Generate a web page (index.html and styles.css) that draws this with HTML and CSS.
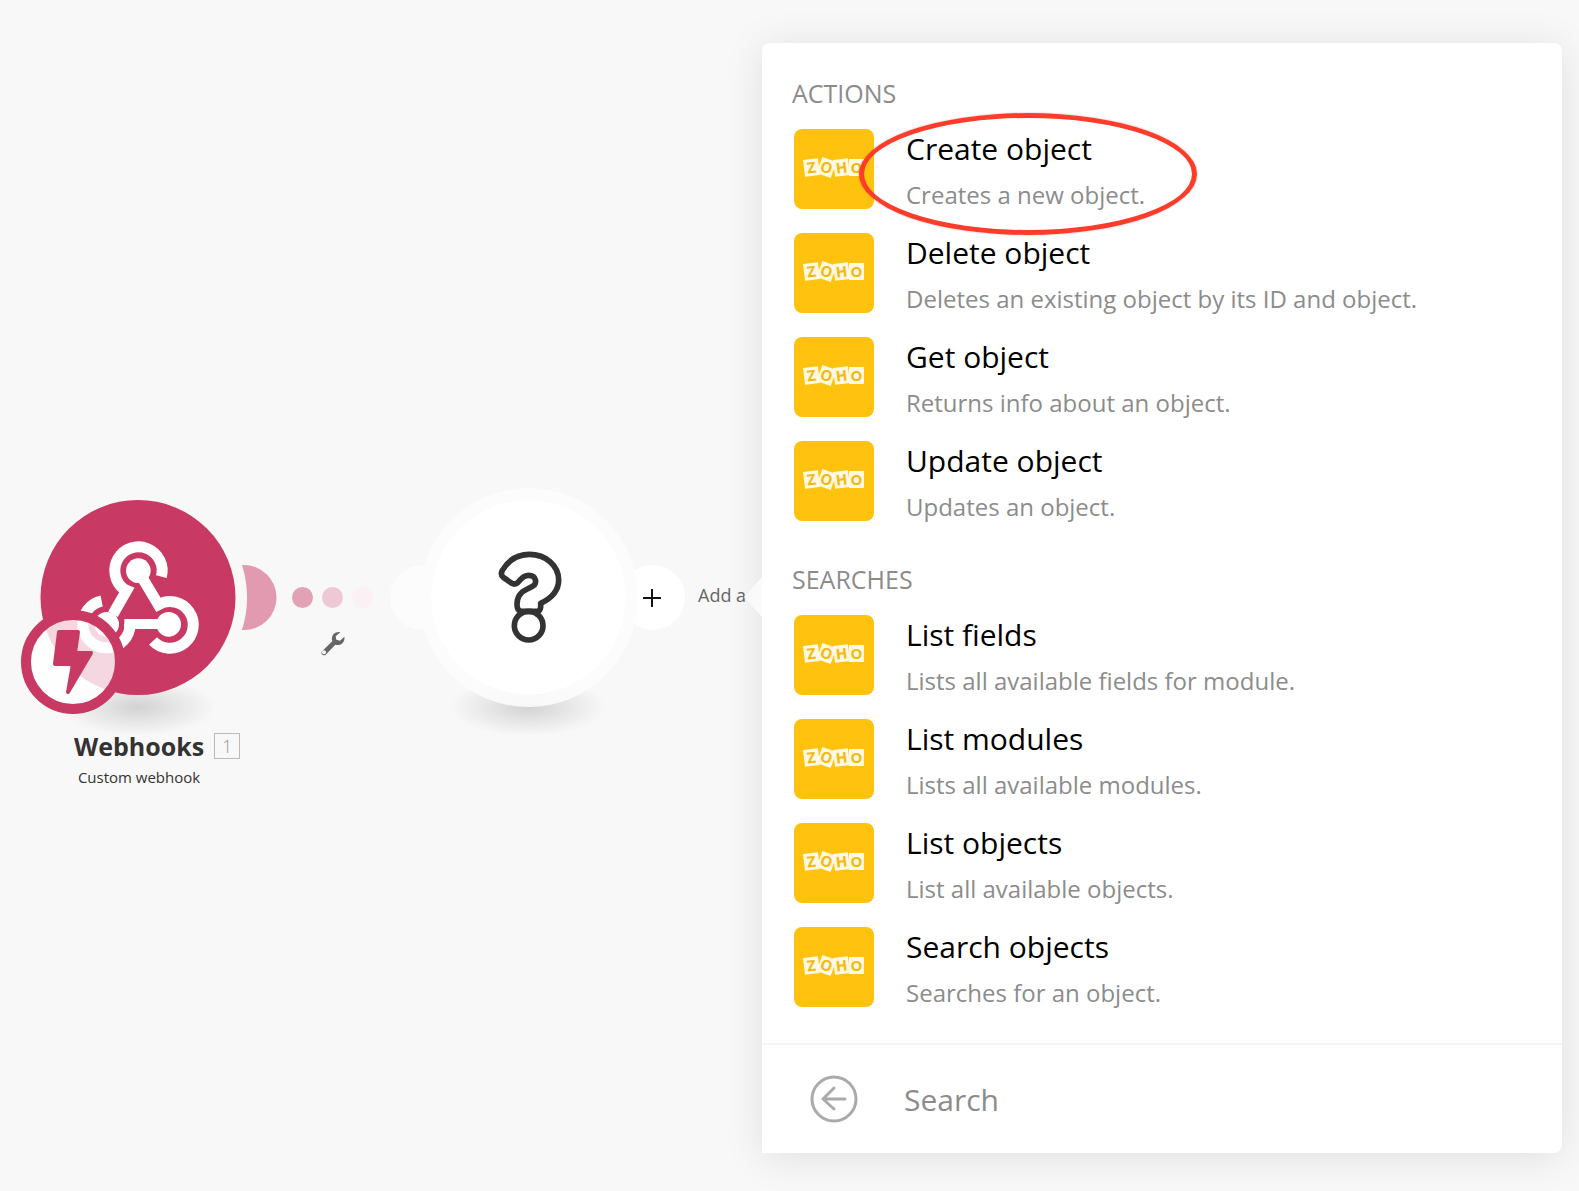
FILE: index.html
```html
<!DOCTYPE html>
<html lang="en">

    <head>
        <meta charset="utf-8">
        <meta name="viewport" content="width=device-width, initial-scale=1">
        <title>Scenario editor</title>
        <link rel="stylesheet" href="styles.css">
    </head>

    <body>
        <div class="editor">
            <main class="canvas">
                <div class="node webhook">
                    <div class="shadow"></div>
                    <svg class="node_art" viewBox="0 0 280 230">
                        <path fill="#e29ab0" d="M232 65H234A32 32 0 0 1 234 130H232A109 109 0 0 0 232 65Z" />
                        <circle cx="128" cy="97.5" r="97.5" fill="#c83a63" />
                        <g transform="translate(0 -20) scale(.33333)" fill="none" stroke="#fff" stroke-width="33">
                            <circle cx="385" cy="272" r="37" fill="#fff" stroke="none" />
                            <circle cx="476" cy="433" r="37" fill="#fff" stroke="none" />
                            <circle cx="290" cy="433" r="37" fill="#fff" stroke="none" />
                            <path d="M454 290A71 71 0 1 0 341 327L350 331L309 403" />
                            <path d="M399 297L445 374A70 70 0 1 1 429 483" />
                            <path d="M275 363A71 71 0 1 0 359 447L359 432" />
                            <path stroke-width="30" d="M343 432H476" />
                        </g>
                        <circle cx="63" cy="162" r="47" fill="#fff" fill-opacity=".8" stroke="#c83a63" stroke-width="10" />
                        <path fill="#c83a63" stroke="#c83a63" stroke-width="4" stroke-linejoin="round" d="M49 132H68L65 153H81L58 192L63 164H45Z" />
                    </svg>
                </div>
                <div class="node_label">
                    <strong>Webhooks</strong>
                    <span class="count">1</span>
                    <span class="node_desc">Custom webhook</span>
                </div>

                <div class="route">
                    <span class="dot dot_strong"></span>
                    <span class="dot dot_mid"></span>
                    <span class="dot dot_light"></span>
                    <button class="wrench" aria-label="Set up a filter">
                        <svg viewBox="0 0 72 72">
                            <path fill="#666" fill-rule="evenodd" d="M58 1C44-3 28 10 34 28L3 58C-2 66 6 73 14 68L43 38C60 43 73 30 70 14L57 26L46 23L44 13ZM9 55A6 6 0 1 1 9 67A6 6 0 1 1 9 55Z" />
                        </svg>
                    </button>
                </div>

                <span class="bump bump_left"></span>
                <button class="bump bump_add" aria-label="Add another module">
                    <svg viewBox="0 0 18 18"><path d="M9 0V18M0 9H18" stroke="#111" stroke-width="2" /></svg>
                </button>
                <div class="node empty">
                    <div class="shadow"></div>
                    <div class="ring"></div>
                    <svg class="question" viewBox="640 200 216 300" fill="none" stroke="#333" stroke-width="17" stroke-linejoin="round">
                        <path d="M665 270C683 240 712 222 746 222C796 222 834 256 834 299C834 331 816 352 780 369V380Q779 392 770 393H720Q709 390 709 372C709 350 717 336 740 326L756 318C770 311 768 285 744 285C726 285 720 298 712 306Q704 315 692 308L668 291Q658 283 665 270Z" />
                        <circle cx="744" cy="436" r="43" />
                    </svg>
                </div>
                <span class="add_text">Add a</span>
            </main>

            <aside class="panel">
                <div class="panel_list">
                    <h2>ACTIONS</h2>
                    <ul>
                        <li>
                            <button class="item">
                                <span class="icon"><i>Z</i><i>O</i><i>H</i><i>O</i></span>
                                <span class="text"><span class="title">Create object</span><span class="desc">Creates a new object.</span></span>
                            </button>
                            <span class="marker"></span>
                        </li>
                        <li>
                            <button class="item">
                                <span class="icon"><i>Z</i><i>O</i><i>H</i><i>O</i></span>
                                <span class="text"><span class="title">Delete object</span><span class="desc">Deletes an existing object by its ID and object.</span></span>
                            </button>
                        </li>
                        <li>
                            <button class="item">
                                <span class="icon"><i>Z</i><i>O</i><i>H</i><i>O</i></span>
                                <span class="text"><span class="title">Get object</span><span class="desc">Returns info about an object.</span></span>
                            </button>
                        </li>
                        <li>
                            <button class="item">
                                <span class="icon"><i>Z</i><i>O</i><i>H</i><i>O</i></span>
                                <span class="text"><span class="title">Update object</span><span class="desc">Updates an object.</span></span>
                            </button>
                        </li>
                    </ul>
                    <h2>SEARCHES</h2>
                    <ul>
                        <li>
                            <button class="item">
                                <span class="icon"><i>Z</i><i>O</i><i>H</i><i>O</i></span>
                                <span class="text"><span class="title">List fields</span><span class="desc">Lists all available fields for module.</span></span>
                            </button>
                        </li>
                        <li>
                            <button class="item">
                                <span class="icon"><i>Z</i><i>O</i><i>H</i><i>O</i></span>
                                <span class="text"><span class="title">List modules</span><span class="desc">Lists all available modules.</span></span>
                            </button>
                        </li>
                        <li>
                            <button class="item">
                                <span class="icon"><i>Z</i><i>O</i><i>H</i><i>O</i></span>
                                <span class="text"><span class="title">List objects</span><span class="desc">List all available objects.</span></span>
                            </button>
                        </li>
                        <li>
                            <button class="item">
                                <span class="icon"><i>Z</i><i>O</i><i>H</i><i>O</i></span>
                                <span class="text"><span class="title">Search objects</span><span class="desc">Searches for an object.</span></span>
                            </button>
                        </li>
                    </ul>
                </div>
                <div class="panel_search">
                    <button class="back" aria-label="Back">
                        <svg viewBox="0 0 48 48" fill="none" stroke="#aaa" stroke-width="3" stroke-linecap="round" stroke-linejoin="round">
                            <circle cx="24" cy="24" r="22" />
                            <path d="M35 24H13M24 13L13 24L24 34" />
                        </svg>
                    </button>
                    <input type="text" placeholder="Search" aria-label="Search">
                </div>
            </aside>
        </div>
    </body>

</html>
```
FILE: styles.css
```css
* {
    margin: 0;
    padding: 0;
    box-sizing: border-box;
}

body {
    background: #f8f8f8;
    font-family: "Open Sans", "Noto Sans", sans-serif;
    color: #333;
}

button {
    border: none;
    background: none;
    font-family: inherit;
    color: inherit;
    text-align: left;
    cursor: pointer;
}

ul {
    list-style: none;
}

svg {
    display: block;
}

.editor {
    display: flex;
    align-items: flex-start;
    min-height: 100vh;
    padding: 43px 17px 38px 0;
}

/* canvas: modules are placed freely */
.canvas {
    flex: 1;
    align-self: stretch;
    position: relative;
}

.node {
    position: absolute;
}

.webhook {
    left: 10px;
    top: 457px;
}

.node_art {
    position: relative;
    width: 280px;
    height: 230px;
}

.shadow {
    position: absolute;
    width: 156px;
    height: 58px;
    background: radial-gradient(closest-side, #d2d2d2, #e6e6e6 50%, #f8f8f8);
}

.webhook .shadow {
    left: 50px;
    top: 178px;
}

.node_label {
    position: absolute;
    left: 74px;
    top: 685px;
    display: grid;
    grid-template-columns: auto auto;
    column-gap: 10px;
    align-items: center;
    line-height: 36px;
}

.node_label strong {
    font-size: 25px;
}

.count {
    width: 26px;
    height: 26px;
    border: 1px solid #bbb;
    font-size: 18px;
    font-weight: 300;
    line-height: 24px;
    text-align: center;
    color: #999;
}

.node_desc {
    font-size: 15px;
    line-height: 26px;
    text-align: center;
}

.route {
    position: absolute;
    left: 292px;
    top: 544px;
    display: grid;
    grid-template-columns: repeat(3, 21px);
    gap: 24px 9px;
}

.dot {
    height: 21px;
    border-radius: 50%;
}

.dot_strong {
    background: #e2a1b5;
}

.dot_mid {
    background: #eec8d4;
}

.dot_light {
    background: #fbf0f4;
}

.wrench {
    grid-column: 2;
    width: 24px;
    height: 24px;
    justify-self: center;
}

.bump {
    position: absolute;
    top: 522px;
    width: 65px;
    height: 65px;
    border-radius: 50%;
}

.bump_left {
    left: 390px;
    background: #fcfcfc;
}

.bump_add {
    left: 620px;
    padding-left: 23px;
    background: #fff;
}

.bump_add svg {
    width: 18px;
    height: 18px;
}

.empty {
    left: 419px;
    top: 445px;
    width: 219px;
    height: 219px;
}

.empty .shadow {
    left: 31px;
    top: 190px;
}

.ring {
    position: relative;
    height: 219px;
    border: 12px solid rgba(252, 252, 252, .9);
    border-radius: 50%;
    background: #fff;
    background-clip: padding-box;
}

.question {
    position: absolute;
    left: 75px;
    top: 59px;
    width: 72px;
    height: 100px;
}

.add_text {
    position: absolute;
    left: 698px;
    top: 540px;
    font-size: 18px;
    line-height: 24px;
    color: #666;
}

/* module list */
.panel {
    position: relative;
    width: 800px;
    max-width: 60%;
    border-radius: 8px 8px 8px 0;
    background: #fff;
    box-shadow: 0 4px 40px rgba(0, 0, 0, .1);
}

.panel:before {
    content: "";
    position: absolute;
    left: -18px;
    top: 534px;
    border: solid transparent;
    border-width: 20px 18px 20px 0;
    border-right-color: #fafafa;
}

.panel_list {
    padding: 32px 32px 30px 30px;
}

.panel_list h2 {
    margin-bottom: 18px;
    font-size: 25px;
    font-weight: normal;
    line-height: 36px;
    color: #8c8c8c;
}

.panel_list ul {
    padding-left: 2px;
}

.panel_list ul + h2 {
    margin-top: 34px;
}

.panel_list li {
    position: relative;
}

.panel_list li + li {
    margin-top: 18px;
}

.item {
    display: flex;
    align-items: flex-start;
    gap: 32px;
    width: 100%;
}

.icon {
    flex: none;
    display: flex;
    align-items: center;
    justify-content: center;
    width: 80px;
    height: 80px;
    padding-bottom: 4px;
    border-radius: 8px;
    background: #ffc20e;
}

/* logo tiles */
.icon i {
    width: 15px;
    height: 17px;
    background: #fff8e2;
    font-size: 15px;
    font-style: normal;
    font-weight: bold;
    line-height: 17px;
    text-align: center;
    color: #f5b90c;
}

.icon i:nth-child(1),
.icon i:nth-child(3) {
    transform: rotate(-7deg);
}

.icon i:nth-child(2) {
    transform: rotate(20deg);
}

.title {
    display: block;
    font-size: 30px;
    line-height: 40px;
    color: #000;
}

.desc {
    display: block;
    margin-top: 6px;
    font-size: 24px;
    line-height: 40px;
    color: #8c8c8c;
}

.marker {
    position: absolute;
    left: 65px;
    top: -16px;
    width: 338px;
    height: 122px;
    border: 5px solid #ff3b2a;
    border-radius: 50%;
    box-shadow: 0 0 2px rgba(0, 0, 0, .3);
    pointer-events: none;
}

.panel_search {
    display: flex;
    align-items: center;
    gap: 46px;
    height: 110px;
    padding: 0 32px 0 48px;
    border-top: 2px solid #f5f5f5;
}

.back {
    width: 48px;
    height: 48px;
}

.panel_search input {
    flex: 1;
    min-width: 0;
    border: none;
    outline: none;
    background: none;
    font-family: inherit;
    font-size: 30px;
    color: #333;
}

.panel_search input::placeholder {
    color: #8c8c8c;
}
```
